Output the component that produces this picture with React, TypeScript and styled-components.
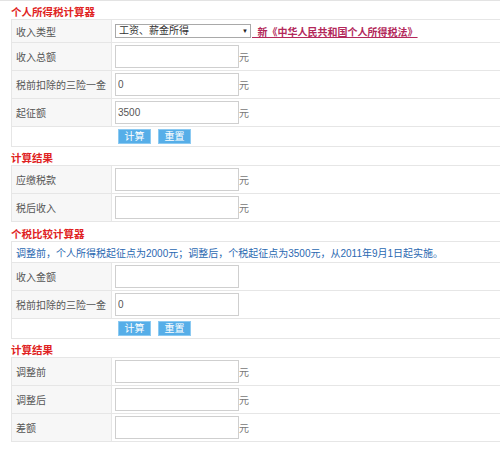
import React from 'react'
import styled, { createGlobalStyle } from 'styled-components'

const GlobalStyle = createGlobalStyle`
    html, body {
        margin: 0;
        padding: 0;
        background: #ffffff;
        overflow: hidden;
    }
    body {
        font-family: "Liberation Sans", "Noto Sans CJK SC", sans-serif;
        font-size: 10px;
        color: #555;
    }
`

const Page = styled.div`
    width: 500px;
    border-top: 1px solid #e3e3e3;
`

const Content = styled.div`
    padding-left: 11px;
`

const Title = styled.h3`
    display: flex;
    align-items: flex-end;
    height: 18px;
    margin: 0;
    padding-bottom: 1px;
    box-sizing: border-box;
    font-size: 10.5px;
    line-height: 11px;
    font-weight: 700;
    color: #e02222;
`

const Table = styled.table`
    width: 489px;
    border-collapse: collapse;
    border-left: 1px solid #e6e6e6;

    td {
        border: 1px solid #e6e6e6;
        border-left: 0;
        border-right: 0;
        padding: 0;
        vertical-align: middle;
    }
`

const Label = styled.td<{ $h?: number }>`
    width: 95px;
    height: ${p => p.$h ?? 27}px;
    padding-left: 4px !important;
    background: #f7f7f7;
    border-right: 1px solid #e6e6e6 !important;
    color: #555;
    white-space: nowrap;
`

const Value = styled.td`
    padding-left: 3px !important;
    white-space: nowrap;
`

const Input = styled.input`
    width: 124px;
    height: 23px;
    box-sizing: border-box;
    border: 1px solid #cfcfcf;
    padding: 0 2px;
    margin: 0;
    font-family: inherit;
    font-size: 10px;
    color: #555;
    vertical-align: middle;
    outline: none;
`

const Unit = styled.span`
    color: #777;
    vertical-align: middle;
`

const SelectWrap = styled.span`
    position: relative;
    display: inline-block;
    vertical-align: middle;
`

const Select = styled.select`
    appearance: none;
    width: 136px;
    height: 14px;
    box-sizing: border-box;
    border: 1px solid #a9a9a9;
    padding: 0 0 0 3px;
    margin: 0;
    font-family: inherit;
    font-size: 10px;
    line-height: 12px;
    color: #333;
    background: #fff;
    display: block;
    outline: none;
`

const Arrow = styled.span`
    position: absolute;
    right: 3px;
    top: 1px;
    font-size: 6px;
    line-height: 12px;
    color: #222;
    pointer-events: none;
`

const LawLink = styled.a`
    margin-left: 1px;
    font-weight: 700;
    color: #b3285a;
    text-decoration: underline;
    vertical-align: middle;
`

const ButtonCell = styled.td<{ $h?: number }>`
    height: ${p => p.$h ?? 19}px;
    padding-left: 106px !important;
`

const Button = styled.button`
    width: 33px;
    height: 15px;
    margin: 0 7px 0 0;
    padding: 0;
    border: 1px solid #8ccaf2;
    background: #56aee8;
    color: #fff;
    font-family: inherit;
    font-size: 10px;
    line-height: 12px;
    vertical-align: middle;
`

const Notice = styled.td`
    height: 20px;
    padding-left: 4px !important;
    color: #2a68b1;
`

const Spacer = styled.div<{ $h: number }>`
    height: ${p => p.$h}px;
`

const BottomLine = styled.div`
    margin-top: 10px;
    border-top: 1px solid #e6e6e6;
`

const Row = ({ label, value, unit = true }: { label: string; value?: string; unit?: boolean }) => (
    <tr>
        <Label>{label}</Label>
        <Value>
            <Input defaultValue={value} />
            {unit && <Unit>元</Unit>}
        </Value>
    </tr>
)

const Buttons = () => (
    <tr>
        <ButtonCell colSpan={2}>
            <Button>计算</Button>
            <Button>重置</Button>
        </ButtonCell>
    </tr>
)

const App = () => {
    return (
        <Page>
            <GlobalStyle />
            <Content>
                <Title>个人所得税计算器</Title>
                <Table>
                    <tbody>
                        <tr>
                            <Label $h={22}>收入类型</Label>
                            <Value>
                                <SelectWrap>
                                    <Select defaultValue="wage">
                                        <option value="wage">工资、薪金所得</option>
                                    </Select>
                                    <Arrow>▼</Arrow>
                                </SelectWrap>
                                <LawLink href="#">{'\u00a0\u00a0新《中华人民共和国个人所得税法》'}</LawLink>
                            </Value>
                        </tr>
                        <Row label="收入总额" />
                        <Row label="税前扣除的三险一金" value="0" />
                        <Row label="起征额" value="3500" />
                        <Buttons />
                    </tbody>
                </Table>

                <Title>计算结果</Title>
                <Table>
                    <tbody>
                        <Row label="应缴税款" />
                        <Row label="税后收入" />
                    </tbody>
                </Table>

                <Spacer $h={1} />
                <Title>个税比较计算器</Title>
                <Table>
                    <tbody>
                        <tr>
                            <Notice colSpan={2}>
                                调整前，个人所得税起征点为2000元；调整后，个税起征点为3500元，从2011年9月1日起实施。
                            </Notice>
                        </tr>
                        <Row label="收入金额" unit={false} />
                        <Row label="税前扣除的三险一金" value="0" unit={false} />
                        <Buttons />
                    </tbody>
                </Table>

                <Title>计算结果</Title>
                <Table>
                    <tbody>
                        <Row label="调整前" />
                        <Row label="调整后" />
                        <Row label="差额" />
                    </tbody>
                </Table>
                <BottomLine />
            </Content>
        </Page>
    )
}

export default React.memo(App)
